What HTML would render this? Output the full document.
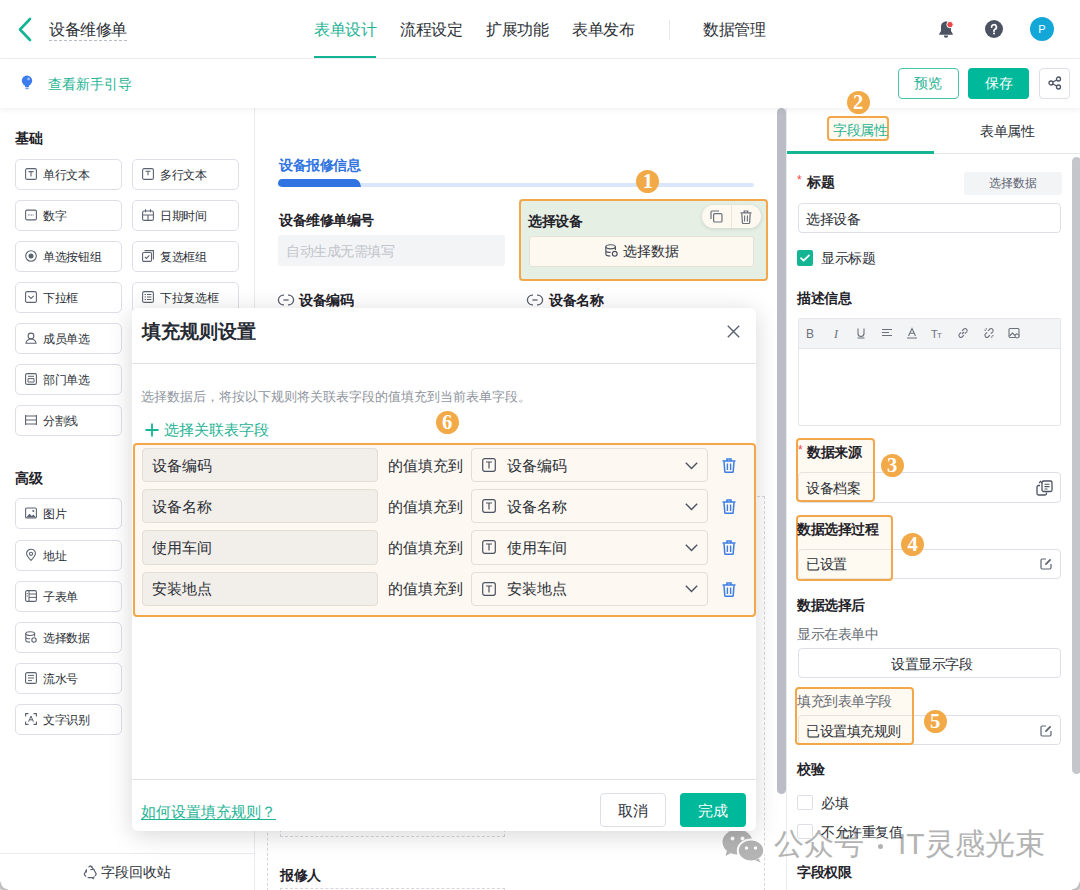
<!DOCTYPE html>
<html><head><meta charset="utf-8">
<style>
*{box-sizing:border-box;margin:0;padding:0}
html,body{width:1080px;height:890px;overflow:hidden;background:#fff}
body{font-family:"Liberation Sans",sans-serif;color:#1f2329;position:relative}
.a{position:absolute}
.t{position:absolute;white-space:nowrap}
svg{position:absolute;overflow:visible}
.btn{position:absolute;border:1px solid #dcdfe6;border-radius:5px;background:#fff;height:31px;width:107px}
.btn .ic{position:absolute;left:9px;top:9px;width:12px;height:12px}
.btn span{position:absolute;left:27px;top:9px;font-size:12px;line-height:12px;color:#2b2f36;white-space:nowrap;transform:scale(0.975);transform-origin:0 50%}
.badge{position:absolute;width:23px;height:23px;border-radius:50%;background:#f2aa48;color:#fff;font-family:"Liberation Serif",serif;font-size:20.5px;line-height:23.5px;text-align:center;font-weight:bold}
.obox{position:absolute;border:2px solid #f2a84a;border-radius:4px}
.ov{background:rgba(255,236,205,0.28)!important}
</style></head>
<body>
<!-- HEADER -->
<div class="a" style="left:0;top:0;width:1080px;height:59px;border-bottom:1px solid #eceef1;background:#fff"></div>
<svg style="left:17px;top:17px" width="16" height="25" viewBox="0 0 16 25"><path d="M13 2 L3 12.5 L13 23" fill="none" stroke="#13b592" stroke-width="2.6" stroke-linecap="round" stroke-linejoin="round"/></svg>
<div class="t" style="left:49px;top:22px;font-size:16px;line-height:16px;color:#2b2f36;transform:scale(0.975);transform-origin:0 50%">设备维修单</div>
<div class="a" style="left:49px;top:40px;width:78px;height:0;border-top:1px dashed #b8bcc4"></div>

<div class="t" style="left:314px;top:21.5px;font-size:16px;line-height:16px;color:#1fb394;transform:scale(0.97);transform-origin:0 50%">表单设计</div>
<div class="a" style="left:314px;top:55.5px;width:62px;height:2.5px;background:#13b592"></div>
<div class="t" style="left:400px;top:21.5px;font-size:16px;line-height:16px;color:#2b2f36;transform:scale(0.97);transform-origin:0 50%">流程设定</div>
<div class="t" style="left:486px;top:21.5px;font-size:16px;line-height:16px;color:#2b2f36;transform:scale(0.97);transform-origin:0 50%">扩展功能</div>
<div class="t" style="left:572px;top:21.5px;font-size:16px;line-height:16px;color:#2b2f36;transform:scale(0.97);transform-origin:0 50%">表单发布</div>
<div class="a" style="left:669px;top:20px;width:1px;height:20px;background:#e6e8eb"></div>
<div class="t" style="left:703px;top:21.5px;font-size:16px;line-height:16px;color:#2b2f36;transform:scale(0.97);transform-origin:0 50%">数据管理</div>

<!-- bell -->
<svg style="left:936px;top:19px" width="20" height="20" viewBox="0 0 20 20">
<path d="M10 2.5c-3 0-5 2.3-5 5.3v4.2l-1.8 3v0.8h13.6v-0.8l-1.8-3V7.8c0-3-2-5.3-5-5.3z" fill="#4b5262"/>
<path d="M7.8 16.6a2.2 2.2 0 0 0 4.4 0z" fill="#4b5262"/>
<circle cx="14" cy="5.6" r="3.2" fill="#f0464a" stroke="#fff" stroke-width="1"/>
</svg>
<!-- help -->
<svg style="left:985px;top:19.5px" width="18" height="18" viewBox="0 0 18 18">
<circle cx="9" cy="9" r="9" fill="#4b5262"/>
<path d="M6.6 7.1a2.4 2.4 0 1 1 3.4 2.2c-0.7 0.35-1 0.8-1 1.5v0.5" fill="none" stroke="#fff" stroke-width="1.7" stroke-linecap="round"/>
<circle cx="9" cy="13.6" r="1" fill="#fff"/>
</svg>
<!-- avatar -->
<div class="a" style="left:1030px;top:17px;width:24px;height:24px;border-radius:50%;background:#13a7d8;color:#fff;font-size:11px;line-height:24px;text-align:center">P</div>

<!-- BAR 2 -->
<div class="a" style="left:0;top:59px;width:1080px;height:49px;background:#fff;box-shadow:0 2px 6px rgba(0,0,0,0.06);z-index:2"></div>
<div style="position:absolute;left:0;top:0;z-index:3">
<svg style="left:21px;top:75px" width="12" height="15" viewBox="0 0 12 15">
<circle cx="6" cy="5.6" r="5.2" fill="#3c7cf0"/>
<path d="M3.6 9.5h4.8l-0.6 2.6h-3.6z" fill="#3c7cf0"/>
<rect x="4.2" y="12.6" width="3.6" height="1.6" rx="0.8" fill="#7aa6f5"/>
<circle cx="7.6" cy="3.9" r="1.4" fill="#9cc0ff"/>
</svg>
<div class="t" style="left:48px;top:76.5px;font-size:14px;line-height:14px;color:#1fb394">查看新手引导</div>
<div class="a" style="left:898px;top:67.5px;width:61px;height:31px;border:1px solid #46c2a8;border-radius:4px;background:#fff"></div>
<div class="t" style="left:914px;top:76px;font-size:14px;line-height:14px;color:#1fb394;font-weight:500">预览</div>
<div class="a" style="left:968px;top:67.5px;width:61px;height:31px;border-radius:4px;background:#00b89a"></div>
<div class="t" style="left:984.5px;top:76px;font-size:14px;line-height:14px;color:#fff;font-weight:500">保存</div>
<div class="a" style="left:1039px;top:67.5px;width:31px;height:31px;border:1px solid #dcdfe6;border-radius:4px;background:#fff"></div>
<svg style="left:1048px;top:76px" width="14" height="14" viewBox="0 0 14 14">
<circle cx="10.5" cy="3" r="2" fill="none" stroke="#4b5262" stroke-width="1.3"/>
<circle cx="3" cy="7" r="2" fill="none" stroke="#4b5262" stroke-width="1.3"/>
<circle cx="10.5" cy="11" r="2" fill="none" stroke="#4b5262" stroke-width="1.3"/>
<path d="M4.8 6L8.7 4M4.8 8L8.7 10" stroke="#4b5262" stroke-width="1.3"/>
</svg>
</div>

<!-- LEFT PANEL -->
<div class="a" style="left:0;top:108px;width:255px;height:782px;border-right:1px solid #e9ebee;background:#fff"></div>
<div class="t" style="left:14.5px;top:131px;font-size:14px;line-height:14px;font-weight:bold;color:#1f2329">基础</div>
<div class="btn" style="left:15px;top:159px"><svg class="ic" style="left:8.8px;top:8px" width="12" height="12" viewBox="0 0 12 12"><rect x="0.6" y="0.6" width="10.8" height="10.8" rx="1.5" fill="none" stroke="#5c6370" stroke-width="1.1"/><path d="M3.5 3.6h5M6 3.6v5" stroke="#5c6370" stroke-width="1.1"/></svg><span>单行文本</span></div>
<div class="btn" style="left:15px;top:200px"><svg class="ic" style="left:8.8px;top:8px" width="12" height="12" viewBox="0 0 12 12"><rect x="0.6" y="1.1" width="10.8" height="9.8" rx="1.5" fill="none" stroke="#5c6370" stroke-width="1.1"/><path d="M2.8 6h6.4" stroke="#5c6370" stroke-width="0.9" stroke-dasharray="1 0.6"/></svg><span>数字</span></div>
<div class="btn" style="left:15px;top:241px"><svg class="ic" style="left:8.8px;top:8px" width="12" height="12" viewBox="0 0 12 12"><circle cx="6" cy="6" r="5.3" fill="none" stroke="#5c6370" stroke-width="1.1"/><circle cx="6" cy="6" r="2.5" fill="#5c6370"/></svg><span>单选按钮组</span></div>
<div class="btn" style="left:15px;top:282px"><svg class="ic" style="left:8.8px;top:8px" width="12" height="12" viewBox="0 0 12 12"><rect x="0.6" y="0.6" width="10.8" height="10.8" rx="1.5" fill="none" stroke="#5c6370" stroke-width="1.1"/><path d="M3.3 4.8l2.7 2.6 2.7-2.6" fill="none" stroke="#5c6370" stroke-width="1.1"/></svg><span>下拉框</span></div>
<div class="btn" style="left:15px;top:323px"><svg class="ic" style="left:8.8px;top:8px" width="12" height="12" viewBox="0 0 12 12"><circle cx="6" cy="4" r="2.9" fill="none" stroke="#5c6370" stroke-width="1.1"/><path d="M1 11.2c0.6-2.8 2.6-4.2 5-4.2s4.4 1.4 5 4.2z" fill="none" stroke="#5c6370" stroke-width="1.1"/></svg><span>成员单选</span></div>
<div class="btn" style="left:15px;top:364px"><svg class="ic" style="left:8.8px;top:8px" width="12" height="12" viewBox="0 0 12 12"><rect x="0.6" y="0.6" width="10.8" height="10.8" rx="1.5" fill="none" stroke="#5c6370" stroke-width="1.1"/><path d="M3 3.3h6M3 5.6h6v3.4H3z" fill="none" stroke="#5c6370" stroke-width="1"/></svg><span>部门单选</span></div>
<div class="btn" style="left:15px;top:405px"><svg class="ic" style="left:8.8px;top:8px" width="12" height="12" viewBox="0 0 12 12"><path d="M0.6 1v10M11.4 1v10M0.6 6h10.8M0.6 2h10.8M0.6 10h10.8" stroke="#5c6370" stroke-width="1.1"/></svg><span>分割线</span></div>
<div class="btn" style="left:132px;top:159px"><svg class="ic" style="left:8.8px;top:8px" width="12" height="12" viewBox="0 0 12 12"><rect x="0.6" y="0.6" width="10.8" height="10.8" rx="1.5" fill="none" stroke="#5c6370" stroke-width="1.1"/><path d="M3.5 3.2h5M6 3.2v4" stroke="#5c6370" stroke-width="1.1"/></svg><span>多行文本</span></div>
<div class="btn" style="left:132px;top:200px"><svg class="ic" style="left:8.8px;top:8px" width="12" height="12" viewBox="0 0 12 12"><rect x="0.6" y="2" width="10.8" height="9.4" rx="1.5" fill="none" stroke="#5c6370" stroke-width="1.1"/><path d="M3.5 0.3v3M8.5 0.3v3M0.8 6h10.4M6 6v5" stroke="#5c6370" stroke-width="1.1"/></svg><span>日期时间</span></div>
<div class="btn" style="left:132px;top:241px"><svg class="ic" style="left:8.8px;top:8px" width="12" height="12" viewBox="0 0 12 12"><path d="M2.5 0.6h8.9v8.9" fill="none" stroke="#5c6370" stroke-width="1.1"/><rect x="0.6" y="2.5" width="8.9" height="8.9" rx="1.2" fill="none" stroke="#5c6370" stroke-width="1.1"/><path d="M2.8 6.8l1.6 1.6 3-3" fill="none" stroke="#5c6370" stroke-width="1.1"/></svg><span>复选框组</span></div>
<div class="btn" style="left:132px;top:282px"><svg class="ic" style="left:8.8px;top:8px" width="12" height="12" viewBox="0 0 12 12"><rect x="0.6" y="0.6" width="10.8" height="10.8" rx="1.5" fill="none" stroke="#5c6370" stroke-width="1.1"/><path d="M2.6 3.5h1.4M5 3.5h4.4M2.6 6h1.4M5 6h4.4M2.6 8.5h1.4M5 8.5h4.4" stroke="#5c6370" stroke-width="1"/></svg><span>下拉复选框</span></div>
<div class="t" style="left:14.5px;top:470.5px;font-size:14px;line-height:14px;font-weight:bold;color:#1f2329">高级</div>
<div class="btn" style="left:15px;top:498.3px"><svg class="ic" style="left:8.8px;top:8px" width="12" height="12" viewBox="0 0 12 12"><rect x="0.6" y="1" width="10.8" height="10" rx="1.3" fill="none" stroke="#5c6370" stroke-width="1.1"/><path d="M1.2 10.4l3.3-3.6 2.3 2.2 1.6-1.6 2.6 3z" fill="#5c6370"/><circle cx="8.3" cy="3.9" r="1" fill="#5c6370"/></svg><span>图片</span></div>
<div class="btn" style="left:15px;top:539.5px"><svg class="ic" style="left:8.8px;top:8px" width="12" height="12" viewBox="0 0 12 12"><path d="M6 11.4c-2.8-2.8-4.4-5-4.4-6.8a4.4 4.4 0 0 1 8.8 0c0 1.8-1.6 4-4.4 6.8z" fill="none" stroke="#5c6370" stroke-width="1.1"/><circle cx="6" cy="4.8" r="1.6" fill="none" stroke="#5c6370" stroke-width="1.1"/></svg><span>地址</span></div>
<div class="btn" style="left:15px;top:580.7px"><svg class="ic" style="left:8.8px;top:8px" width="12" height="12" viewBox="0 0 12 12"><rect x="0.6" y="0.6" width="10.8" height="10.8" rx="1.5" fill="none" stroke="#5c6370" stroke-width="1.1"/><path d="M4 0.8v10.4M4 4h7.2M4 7.4h7.2M1.6 3.6h1.2M1.6 6h1.2" stroke="#5c6370" stroke-width="1"/></svg><span>子表单</span></div>
<div class="btn" style="left:15px;top:621.9px"><svg class="ic" style="left:8.8px;top:8px" width="12" height="12" viewBox="0 0 12 12"><ellipse cx="5.2" cy="2.6" rx="4.4" ry="1.9" fill="none" stroke="#5c6370" stroke-width="1.1"/><path d="M0.8 2.6v6.6c0 1 1.8 1.9 4.2 1.9M9.6 2.6v3M0.8 5.9c0 1 1.8 1.9 4.4 1.9" fill="none" stroke="#5c6370" stroke-width="1.1"/><circle cx="9" cy="9" r="2.2" fill="none" stroke="#5c6370" stroke-width="1.1"/></svg><span>选择数据</span></div>
<div class="btn" style="left:15px;top:663.1px"><svg class="ic" style="left:8.8px;top:8px" width="12" height="12" viewBox="0 0 12 12"><rect x="0.6" y="0.6" width="10.8" height="10.8" rx="1.5" fill="none" stroke="#5c6370" stroke-width="1.1"/><path d="M3 3.4h6M3 6h6M3 8.6h4" stroke="#5c6370" stroke-width="1"/></svg><span>流水号</span></div>
<div class="btn" style="left:15px;top:704.3px"><svg class="ic" style="left:8.8px;top:8px" width="12" height="12" viewBox="0 0 12 12"><path d="M0.6 3.5V0.6h2.9M8.5 0.6h2.9v2.9M11.4 8.5v2.9H8.5M3.5 11.4H0.6V8.5" fill="none" stroke="#5c6370" stroke-width="1.1"/><path d="M3.6 8.8L6 3l2.4 5.8M4.5 6.8h3" fill="none" stroke="#5c6370" stroke-width="1"/></svg><span>文字识别</span></div>
<div class="a" style="left:0;top:853px;width:254px;height:1px;background:#e9ebee"></div>
<svg style="left:83px;top:865px" width="15" height="14" viewBox="0 0 15 14"><path d="M5.6 2.2L7.5 0.8l2 1.5M10.6 4.3l2.6 4.6-1 2.2M9.6 12.6H4.6M2.8 11.6l-1.6-2.4 2.4-4.4" fill="none" stroke="#5c6370" stroke-width="1.2" stroke-linejoin="round"/><path d="M8.2 1.6l2.4 2.7-3.3 0.3M11.8 11.8l-2.6 0.9 1.6 1.2M3.5 4.2L3.2 7.6" fill="none" stroke="#5c6370" stroke-width="1.2"/></svg>
<div class="t" style="left:101px;top:865px;font-size:14px;line-height:14px;color:#2b2f36">字段回收站</div>

<!-- CANVAS -->
<div class="t" style="left:278.5px;top:157.8px;font-size:14px;line-height:14px;transform:scale(0.97);transform-origin:0 50%;font-weight:bold;color:#2f74e0">设备报修信息</div>
<div class="a" style="left:278px;top:183px;width:476px;height:4px;background:#d9e6fb;border-radius:2px"></div>
<svg style="left:278px;top:179px" width="83" height="8" viewBox="0 0 83 8"><path d="M4 0H76C79 0 80.5 1.5 82 4L83 8H5C2 8 0 6.5 0 4.5C0 2 1.5 0 4 0Z" fill="#2f74e0"/></svg>
<div class="t" style="left:278.5px;top:213.3px;font-size:14px;line-height:14px;transform:scale(0.97);transform-origin:0 50%;font-weight:bold;color:#1f2329">设备维修单编号</div>
<div class="a" style="left:278px;top:235px;width:227px;height:31px;background:#f3f4f6;border-radius:3px"></div>
<div class="t" style="left:286px;top:243.85px;font-size:14px;line-height:14px;transform:scale(0.97);transform-origin:0 50%;color:#c2c5cb">自动生成无需填写</div>
<div class="obox" style="left:518.5px;top:199px;width:249px;height:81.5px;background:#e6efe4"></div>
<div class="t" style="left:528px;top:213.9px;font-size:14px;line-height:14px;transform:scale(0.97);transform-origin:0 50%;font-weight:bold;color:#1f2329">选择设备</div>
<div class="a" style="left:702px;top:205px;width:59px;height:23px;background:#fdf8f0;border-radius:12px;box-shadow:0 1px 4px rgba(0,0,0,0.12)"></div>
<div class="a" style="left:731px;top:205px;width:1px;height:23px;background:#ece6dc"></div>
<svg style="left:710px;top:210px" width="13" height="13" viewBox="0 0 13 13"><rect x="3.6" y="3.6" width="8.4" height="8.4" rx="1.3" fill="none" stroke="#6b717c" stroke-width="1.2"/><path d="M1 9V2.2C1 1.5 1.5 1 2.2 1H9" fill="none" stroke="#6b717c" stroke-width="1.2"/></svg>
<svg style="left:739.5px;top:209.5px" width="12" height="14" viewBox="0 0 12 14"><path d="M0.5 2.8h11M4.2 2.6V1h3.6v1.6" fill="none" stroke="#6b717c" stroke-width="1.2"/><path d="M1.8 3.2l0.6 9.4c0 0.5 0.4 0.9 0.9 0.9h5.4c0.5 0 0.9-0.4 0.9-0.9l0.6-9.4" fill="none" stroke="#6b717c" stroke-width="1.2"/><path d="M4.6 5.4v6M7.4 5.4v6" stroke="#6b717c" stroke-width="1.1"/></svg>
<div class="a" style="left:528.5px;top:235.5px;width:225px;height:31px;background:#fdf8f0;border:1px solid #e6e1d9;border-radius:3px"></div>
<svg style="left:604.5px;top:244px" width="13" height="13" viewBox="0 0 12 12"><ellipse cx="5.2" cy="2.6" rx="4.4" ry="1.9" fill="none" stroke="#4b5262" stroke-width="1.1"/><path d="M0.8 2.6v6.6c0 1 1.8 1.9 4.2 1.9M9.6 2.6v3M0.8 5.9c0 1 1.8 1.9 4.4 1.9" fill="none" stroke="#4b5262" stroke-width="1.1"/><circle cx="9" cy="9" r="2.2" fill="none" stroke="#4b5262" stroke-width="1.1"/></svg>
<div class="t" style="left:622.5px;top:244px;font-size:14px;line-height:14px;color:#2b2f36">选择数据</div>
<svg style="left:279px;top:294px" width="14" height="12" viewBox="0 0 14 12"><path d="M5 1.2H4.2a4.8 4.8 0 0 0 0 9.6H5M9 1.2h0.8a4.8 4.8 0 0 1 0 9.6H9" fill="none" stroke="#5c6370" stroke-width="1.3"/><path d="M4.4 6h5.2" stroke="#5c6370" stroke-width="1.3"/></svg>
<div class="t" style="left:298.5px;top:292.9px;font-size:14px;line-height:14px;transform:scale(0.97);transform-origin:0 50%;font-weight:bold;color:#1f2329">设备编码</div>
<svg style="left:528px;top:294px" width="14" height="12" viewBox="0 0 14 12"><path d="M5 1.2H4.2a4.8 4.8 0 0 0 0 9.6H5M9 1.2h0.8a4.8 4.8 0 0 1 0 9.6H9" fill="none" stroke="#5c6370" stroke-width="1.3"/><path d="M4.4 6h5.2" stroke="#5c6370" stroke-width="1.3"/></svg>
<div class="t" style="left:548.5px;top:292.9px;font-size:14px;line-height:14px;transform:scale(0.97);transform-origin:0 50%;font-weight:bold;color:#1f2329">设备名称</div>
<div class="a" style="left:267px;top:496px;width:498px;height:420px;border:1px dashed #d4d7dc"></div>
<div class="a" style="left:280px;top:780px;width:225px;height:57px;border:1px dashed #d4d7dc;border-top:none"></div>
<div class="t" style="left:279.5px;top:867.8px;font-size:14px;line-height:14px;transform:scale(0.97);transform-origin:0 50%;font-weight:bold;color:#1f2329">报修人</div>
<div class="a" style="left:280px;top:888px;width:225px;height:20px;border:1px dashed #d4d7dc"></div>
<div class="a" style="left:777px;top:108px;width:9px;height:686px;background:#babdc5;border-radius:4.5px"></div>
<div class="a" style="left:786px;top:108px;width:1px;height:782px;background:#e9ebee"></div>

<!-- WATERMARK -->
<div style="position:absolute;left:0;top:0;">
<svg style="left:722px;top:829px" width="43" height="34" viewBox="0 0 43 34">
<ellipse cx="15.5" cy="13" rx="15" ry="12.5" fill="#b4b4b4"/>
<path d="M5 21l-1.5 6 6.5-3.5z" fill="#b4b4b4"/>
<circle cx="10.5" cy="9.5" r="2" fill="#fff"/><circle cx="20.5" cy="9.5" r="2" fill="#fff"/>
<ellipse cx="29" cy="21.5" rx="13.2" ry="11" fill="#b4b4b4" stroke="#fff" stroke-width="2"/>
<path d="M36.5 29.5l2.2 4-5.5-2.2z" fill="#b4b4b4"/>
<circle cx="24.5" cy="19" r="1.7" fill="#fff"/><circle cx="33.5" cy="19" r="1.7" fill="#fff"/>
</svg>
<div class="t" style="left:773.5px;top:829px;font-size:30px;line-height:30px;color:#b3b3b3;font-weight:300">公众号</div>
<div class="a" style="left:877.5px;top:843.5px;width:5px;height:5px;border-radius:50%;background:#b3b3b3"></div>
<div class="t" style="left:898px;top:829px;font-size:30px;line-height:30px;color:#b3b3b3;font-weight:300">IT</div>
<div class="t" style="left:925px;top:829px;font-size:30px;line-height:30px;color:#b3b3b3;font-weight:300">灵感光束</div>
</div>

<!-- RIGHT PANEL -->
<div class="a" style="left:787px;top:151px;width:147px;height:2.5px;background:#13b592"></div>
<div class="a" style="left:934px;top:153px;width:146px;height:1px;background:#e4e6ea"></div>
<div class="obox" style="left:826.5px;top:116px;width:62.0px;height:25px;background:rgba(255,238,210,0.3)"></div>
<div class="t" style="left:833px;top:123.3px;font-size:14px;line-height:14px;transform:scale(0.97);transform-origin:0 50%;color:#1fb394;">字段属性</div>
<div class="t" style="left:979.5px;top:123.9px;font-size:14px;line-height:14px;transform:scale(0.97);transform-origin:0 50%;color:#2b2f36;">表单属性</div>
<div class="a" style="left:1071.5px;top:157px;width:9px;height:617px;background:#c4c6cb;border-radius:4.5px"></div>
<div class="t" style="left:797px;top:174.0px;font-size:12px;line-height:12px;color:#f04444;">*</div>
<div class="t" style="left:807px;top:175.0px;font-size:14px;line-height:14px;transform:scale(0.97);transform-origin:0 50%;font-weight:bold;color:#1f2329;">标题</div>
<div class="a" style="left:963.5px;top:171.5px;width:98px;height:23px;background:#f3f4f6;border-radius:3px"></div>
<div class="t" style="left:988.5px;top:177.55px;font-size:11.9px;line-height:11.9px;color:#5c6370;">选择数据</div>
<div class="a" style="left:797.5px;top:202.5px;width:263.5px;height:30.0px;border:1px solid #dcdfe6;border-radius:4px;background:#fff"></div>
<div class="t" style="left:805.5px;top:211.5px;font-size:14px;line-height:14px;transform:scale(0.97);transform-origin:0 50%;color:#2b2f36;">选择设备</div>
<div class="a" style="left:796.5px;top:250px;width:16px;height:16px;background:#13b592;border-radius:2px"></div>
<svg style="left:796.5px;top:250px" width="16" height="16" viewBox="0 0 16 16"><path d="M4 8.2l2.6 2.5L12 5.4" fill="none" stroke="#fff" stroke-width="1.8" stroke-linecap="round" stroke-linejoin="round"/></svg>
<div class="t" style="left:820.5px;top:250.5px;font-size:14px;line-height:14px;transform:scale(0.97);transform-origin:0 50%;color:#2b2f36;">显示标题</div>
<div class="t" style="left:797px;top:291.0px;font-size:14px;line-height:14px;transform:scale(0.97);transform-origin:0 50%;font-weight:bold;color:#1f2329;">描述信息</div>
<div class="a" style="left:797.5px;top:317.5px;width:263.5px;height:108px;border:1px solid #e4e6ea;border-radius:2px;background:#fff"></div>
<div class="a" style="left:798.5px;top:318.5px;width:261.5px;height:30px;background:#f3f4f6;border-bottom:1px solid #e4e6ea"></div>
<svg style="left:804px;top:327.3px" width="12" height="12" viewBox="0 0 12 12"><text x="6" y="10.5" font-size="12" font-family="Liberation Sans" fill="#6b717c" text-anchor="middle">B</text></svg>
<svg style="left:829.5px;top:327.3px" width="12" height="12" viewBox="0 0 12 12"><text x="6" y="10.5" font-size="12" font-family="Liberation Serif" font-style="italic" fill="#6b717c" text-anchor="middle">I</text></svg>
<svg style="left:855px;top:327.3px" width="12" height="12" viewBox="0 0 12 12"><path d="M3 1.5v5a3 3 0 0 0 6 0v-5M2.5 11h7" fill="none" stroke="#6b717c" stroke-width="1.1"/></svg>
<svg style="left:880.6px;top:327.3px" width="12" height="12" viewBox="0 0 12 12"><path d="M1 2.5h10M1 5.5h7M1 8.5h10" fill="none" stroke="#6b717c" stroke-width="1.1"/></svg>
<svg style="left:906px;top:327.3px" width="12" height="12" viewBox="0 0 12 12"><path d="M2.5 9L6 1.5 9.5 9M3.8 6.3h4.4M1 11h10" fill="none" stroke="#6b717c" stroke-width="1.1"/></svg>
<svg style="left:931.4px;top:327.3px" width="12" height="12" viewBox="0 0 12 12"><text x="0" y="10.5" font-size="11" font-family="Liberation Sans" fill="#6b717c">T</text><text x="6" y="10.5" font-size="8" font-family="Liberation Sans" fill="#6b717c">T</text></svg>
<svg style="left:956.5px;top:327.3px" width="12" height="12" viewBox="0 0 12 12"><path d="M5 7l2-2M4.2 5.3l-1.9 1.9a2 2 0 0 0 2.8 2.8l1.9-1.9M7.8 6.7l1.9-1.9a2 2 0 0 0-2.8-2.8L5 3.9" fill="none" stroke="#6b717c" stroke-width="1.1"/></svg>
<svg style="left:982.5px;top:327.3px" width="12" height="12" viewBox="0 0 12 12"><path d="M4.2 5.3l-1.9 1.9a2 2 0 0 0 2.8 2.8l1.9-1.9M7.8 6.7l1.9-1.9a2 2 0 0 0-2.8-2.8L5 3.9M1.5 3l1.2 0.6M3 1.3l0.5 1.1M9 10.7l-0.5-1.1M10.5 9l-1.2-0.6" fill="none" stroke="#6b717c" stroke-width="1.1"/></svg>
<svg style="left:1007.9px;top:327.3px" width="12" height="12" viewBox="0 0 12 12"><rect x="1" y="1.5" width="10" height="9" rx="1" fill="none" stroke="#6b717c" stroke-width="1.1"/><path d="M1.5 9l3-3 2.5 2.5 1.5-1.5 2 2" fill="none" stroke="#6b717c" stroke-width="1.1"/><circle cx="9" cy="9" r="2" fill="#f3f4f6" stroke="#6b717c" stroke-width="1"/></svg>
<div class="a" style="left:797.5px;top:471.5px;width:263.5px;height:31.0px;border:1px solid #dcdfe6;border-radius:4px;background:#fff"></div>
<div class="obox" style="left:795.5px;top:438px;width:79.5px;height:63.5px;background:rgba(255,238,210,0.3)"></div>
<div class="t" style="left:798px;top:444.0px;font-size:12px;line-height:12px;color:#f04444;">*</div>
<div class="t" style="left:806.5px;top:444.8px;font-size:14px;line-height:14px;transform:scale(0.97);transform-origin:0 50%;font-weight:bold;color:#1f2329;">数据来源</div>
<div class="t" style="left:806px;top:480.6px;font-size:14px;line-height:14px;transform:scale(0.97);transform-origin:0 50%;color:#2b2f36;">设备档案</div>
<svg style="left:1036px;top:479.5px" width="17" height="16" viewBox="0 0 17 16"><rect x="6" y="1" width="10" height="10.5" rx="1.5" fill="none" stroke="#4b5262" stroke-width="1.3"/><path d="M8.5 4.2h5M8.5 6.6h5M8.5 9h3" stroke="#4b5262" stroke-width="1.1"/><path d="M4 5.5H2.5C1.7 5.5 1 6.2 1 7v6.5C1 14.3 1.7 15 2.5 15H9c0.8 0 1.5-0.7 1.5-1.5V12.5" fill="none" stroke="#4b5262" stroke-width="1.3"/><path d="M3 3.2l1.6-1.8 1.4 1.8" fill="none" stroke="#4b5262" stroke-width="1.1"/></svg>
<div class="badge" style="left:880.5px;top:453.5px">3</div>
<div class="a" style="left:797.5px;top:548.5px;width:263.5px;height:30.5px;border:1px solid #dcdfe6;border-radius:4px;background:#fff"></div>
<div class="obox" style="left:795.5px;top:514.5px;width:97.0px;height:66.0px;background:rgba(255,238,210,0.3)"></div>
<div class="t" style="left:797px;top:521.7px;font-size:14px;line-height:14px;transform:scale(0.97);transform-origin:0 50%;font-weight:bold;color:#1f2329;">数据选择过程</div>
<div class="t" style="left:806px;top:557.0px;font-size:14px;line-height:14px;transform:scale(0.97);transform-origin:0 50%;color:#2b2f36;">已设置</div>
<svg style="left:1040px;top:558px" width="12" height="12" viewBox="0 0 12 12"><path d="M6 1H2.2C1.5 1 1 1.5 1 2.2v7.6c0 0.7 0.5 1.2 1.2 1.2h7.6c0.7 0 1.2-0.5 1.2-1.2V6" fill="none" stroke="#5c6370" stroke-width="1.2"/><path d="M5 7l0.3-1.6L10 0.8l1.2 1.2L6.6 6.7z" fill="#5c6370"/></svg>
<div class="badge" style="left:901.0px;top:533.2px">4</div>
<div class="t" style="left:797px;top:598.0px;font-size:14px;line-height:14px;transform:scale(0.97);transform-origin:0 50%;font-weight:bold;color:#1f2329;">数据选择后</div>
<div class="t" style="left:797px;top:627.0px;font-size:14px;line-height:14px;transform:scale(0.97);transform-origin:0 50%;color:#646a73;">显示在表单中</div>
<div class="a" style="left:797.5px;top:648.2px;width:263.5px;height:30.199999999999932px;border:1px solid #dcdfe6;border-radius:4px;background:#fff"></div>
<div class="t" style="left:891px;top:656.6px;font-size:14px;line-height:14px;transform:scale(0.97);transform-origin:0 50%;color:#2b2f36;">设置显示字段</div>
<div class="a" style="left:797.5px;top:715.2px;width:263.5px;height:30.09999999999991px;border:1px solid #dcdfe6;border-radius:4px;background:#fff"></div>
<div class="obox" style="left:794.5px;top:687px;width:119.5px;height:57.5px;background:rgba(255,238,210,0.3)"></div>
<div class="t" style="left:797px;top:694.0px;font-size:14px;line-height:14px;transform:scale(0.97);transform-origin:0 50%;color:#646a73;">填充到表单字段</div>
<div class="t" style="left:806px;top:723.5px;font-size:14px;line-height:14px;transform:scale(0.97);transform-origin:0 50%;color:#2b2f36;">已设置填充规则</div>
<svg style="left:1040px;top:724.5px" width="12" height="12" viewBox="0 0 12 12"><path d="M6 1H2.2C1.5 1 1 1.5 1 2.2v7.6c0 0.7 0.5 1.2 1.2 1.2h7.6c0.7 0 1.2-0.5 1.2-1.2V6" fill="none" stroke="#5c6370" stroke-width="1.2"/><path d="M5 7l0.3-1.6L10 0.8l1.2 1.2L6.6 6.7z" fill="#5c6370"/></svg>
<div class="badge" style="left:923.7px;top:709.9px">5</div>
<div class="t" style="left:797px;top:761.5px;font-size:14px;line-height:14px;transform:scale(0.97);transform-origin:0 50%;font-weight:bold;color:#1f2329;">校验</div>
<div class="a" style="left:797px;top:795.3px;width:15.5px;height:15px;border:1px solid #dcdfe6;border-radius:2px;background:#fff"></div>
<div class="t" style="left:820.5px;top:796.0px;font-size:14px;line-height:14px;transform:scale(0.97);transform-origin:0 50%;color:#2b2f36;">必填</div>
<div class="a" style="left:797px;top:824.3px;width:15.5px;height:15px;border:1px solid #dcdfe6;border-radius:2px;background:#fff"></div>
<div class="t" style="left:820.5px;top:825.0px;font-size:14px;line-height:14px;transform:scale(0.97);transform-origin:0 50%;color:#2b2f36;">不允许重复值</div>
<div class="t" style="left:797px;top:865.0px;font-size:14px;line-height:14px;transform:scale(0.97);transform-origin:0 50%;font-weight:bold;color:#1f2329;">字段权限</div>

<!-- MODAL -->
<div class="a" style="left:132px;top:308px;width:624px;height:523px;background:#fff;border-radius:6px;box-shadow:0 4px 24px rgba(0,0,0,0.16);z-index:10">
<div class="t" style="left:9.8px;top:15.05px;font-size:18.9px;line-height:18.9px;font-weight:bold;color:#252a33;">填充规则设置</div>
<svg style="left:595px;top:17px" width="13" height="13" viewBox="0 0 13 13"><path d="M0.8 0.8l11.4 11.4M12.2 0.8L0.8 12.2" stroke="#5a6270" stroke-width="1.4"/></svg>
<div class="a" style="left:0;top:55px;width:624px;height:1px;background:#e1e3e7"></div>
<div class="t" style="left:9px;top:82.3px;font-size:13px;line-height:13px;color:#8f959e;">选择数据后，将按以下规则将关联表字段的值填充到当前表单字段。</div>
<svg style="left:12.5px;top:115px" width="14" height="14" viewBox="0 0 14 14"><path d="M7 0.5v13M0.5 7h13" stroke="#13b592" stroke-width="1.8"/></svg>
<div class="t" style="left:32px;top:114.2px;font-size:15px;line-height:15px;color:#1fb394;">选择关联表字段</div>
<div class="obox" style="left:0.5px;top:134.7px;width:623px;height:174px;background:#fdf8f1"></div>
<div class="a" style="left:9.6px;top:140.2px;width:236.6px;height:34.2px;background:#f2eee9;border:1px solid #e2ddd5;border-radius:4px"></div>
<div class="t" style="left:19.5px;top:149.7px;font-size:15px;line-height:15px;color:#2b2f36;">设备编码</div>
<div class="t" style="left:255.5px;top:149.7px;font-size:15px;line-height:15px;color:#2b2f36;">的值填充到</div>
<div class="a" style="left:339px;top:140.2px;width:236.7px;height:34.2px;border:1px solid #e3ded7;border-radius:4px"></div>
<svg style="left:350px;top:150.2px" width="14" height="14" viewBox="0 0 14 14"><rect x="0.7" y="0.7" width="12.6" height="12.6" rx="2" fill="none" stroke="#4b5262" stroke-width="1.2"/><path d="M4 4h6M7 4v6.5" stroke="#4b5262" stroke-width="1.2"/></svg>
<div class="t" style="left:375px;top:149.7px;font-size:15px;line-height:15px;color:#2b2f36;">设备编码</div>
<svg style="left:552.5px;top:153.7px" width="13" height="8" viewBox="0 0 13 8"><path d="M0.8 0.8l5.7 5.7 5.7-5.7" fill="none" stroke="#4b5262" stroke-width="1.4"/></svg>
<svg style="left:590px;top:150.2px" width="14" height="15" viewBox="0 0 14 15"><path d="M0.5 3h13M5 3V1h4v2" fill="none" stroke="#3b7de6" stroke-width="1.5"/><path d="M2 3.5l0.8 10c0 0.4 0.3 0.8 0.8 0.8h6.8c0.5 0 0.8-0.4 0.8-0.8l0.8-10" fill="none" stroke="#3b7de6" stroke-width="1.5"/><path d="M5.4 5.6v6.4M8.6 5.6v6.4" stroke="#3b7de6" stroke-width="1.4"/></svg>
<div class="a" style="left:9.6px;top:181.3px;width:236.6px;height:34.2px;background:#f2eee9;border:1px solid #e2ddd5;border-radius:4px"></div>
<div class="t" style="left:19.5px;top:190.8px;font-size:15px;line-height:15px;color:#2b2f36;">设备名称</div>
<div class="t" style="left:255.5px;top:190.8px;font-size:15px;line-height:15px;color:#2b2f36;">的值填充到</div>
<div class="a" style="left:339px;top:181.3px;width:236.7px;height:34.2px;border:1px solid #e3ded7;border-radius:4px"></div>
<svg style="left:350px;top:191.3px" width="14" height="14" viewBox="0 0 14 14"><rect x="0.7" y="0.7" width="12.6" height="12.6" rx="2" fill="none" stroke="#4b5262" stroke-width="1.2"/><path d="M4 4h6M7 4v6.5" stroke="#4b5262" stroke-width="1.2"/></svg>
<div class="t" style="left:375px;top:190.8px;font-size:15px;line-height:15px;color:#2b2f36;">设备名称</div>
<svg style="left:552.5px;top:194.8px" width="13" height="8" viewBox="0 0 13 8"><path d="M0.8 0.8l5.7 5.7 5.7-5.7" fill="none" stroke="#4b5262" stroke-width="1.4"/></svg>
<svg style="left:590px;top:191.3px" width="14" height="15" viewBox="0 0 14 15"><path d="M0.5 3h13M5 3V1h4v2" fill="none" stroke="#3b7de6" stroke-width="1.5"/><path d="M2 3.5l0.8 10c0 0.4 0.3 0.8 0.8 0.8h6.8c0.5 0 0.8-0.4 0.8-0.8l0.8-10" fill="none" stroke="#3b7de6" stroke-width="1.5"/><path d="M5.4 5.6v6.4M8.6 5.6v6.4" stroke="#3b7de6" stroke-width="1.4"/></svg>
<div class="a" style="left:9.6px;top:222.4px;width:236.6px;height:34.2px;background:#f2eee9;border:1px solid #e2ddd5;border-radius:4px"></div>
<div class="t" style="left:19.5px;top:231.9px;font-size:15px;line-height:15px;color:#2b2f36;">使用车间</div>
<div class="t" style="left:255.5px;top:231.9px;font-size:15px;line-height:15px;color:#2b2f36;">的值填充到</div>
<div class="a" style="left:339px;top:222.4px;width:236.7px;height:34.2px;border:1px solid #e3ded7;border-radius:4px"></div>
<svg style="left:350px;top:232.4px" width="14" height="14" viewBox="0 0 14 14"><rect x="0.7" y="0.7" width="12.6" height="12.6" rx="2" fill="none" stroke="#4b5262" stroke-width="1.2"/><path d="M4 4h6M7 4v6.5" stroke="#4b5262" stroke-width="1.2"/></svg>
<div class="t" style="left:375px;top:231.9px;font-size:15px;line-height:15px;color:#2b2f36;">使用车间</div>
<svg style="left:552.5px;top:235.9px" width="13" height="8" viewBox="0 0 13 8"><path d="M0.8 0.8l5.7 5.7 5.7-5.7" fill="none" stroke="#4b5262" stroke-width="1.4"/></svg>
<svg style="left:590px;top:232.4px" width="14" height="15" viewBox="0 0 14 15"><path d="M0.5 3h13M5 3V1h4v2" fill="none" stroke="#3b7de6" stroke-width="1.5"/><path d="M2 3.5l0.8 10c0 0.4 0.3 0.8 0.8 0.8h6.8c0.5 0 0.8-0.4 0.8-0.8l0.8-10" fill="none" stroke="#3b7de6" stroke-width="1.5"/><path d="M5.4 5.6v6.4M8.6 5.6v6.4" stroke="#3b7de6" stroke-width="1.4"/></svg>
<div class="a" style="left:9.6px;top:263.5px;width:236.6px;height:34.2px;background:#f2eee9;border:1px solid #e2ddd5;border-radius:4px"></div>
<div class="t" style="left:19.5px;top:273.0px;font-size:15px;line-height:15px;color:#2b2f36;">安装地点</div>
<div class="t" style="left:255.5px;top:273.0px;font-size:15px;line-height:15px;color:#2b2f36;">的值填充到</div>
<div class="a" style="left:339px;top:263.5px;width:236.7px;height:34.2px;border:1px solid #e3ded7;border-radius:4px"></div>
<svg style="left:350px;top:273.5px" width="14" height="14" viewBox="0 0 14 14"><rect x="0.7" y="0.7" width="12.6" height="12.6" rx="2" fill="none" stroke="#4b5262" stroke-width="1.2"/><path d="M4 4h6M7 4v6.5" stroke="#4b5262" stroke-width="1.2"/></svg>
<div class="t" style="left:375px;top:273.0px;font-size:15px;line-height:15px;color:#2b2f36;">安装地点</div>
<svg style="left:552.5px;top:277.0px" width="13" height="8" viewBox="0 0 13 8"><path d="M0.8 0.8l5.7 5.7 5.7-5.7" fill="none" stroke="#4b5262" stroke-width="1.4"/></svg>
<svg style="left:590px;top:273.5px" width="14" height="15" viewBox="0 0 14 15"><path d="M0.5 3h13M5 3V1h4v2" fill="none" stroke="#3b7de6" stroke-width="1.5"/><path d="M2 3.5l0.8 10c0 0.4 0.3 0.8 0.8 0.8h6.8c0.5 0 0.8-0.4 0.8-0.8l0.8-10" fill="none" stroke="#3b7de6" stroke-width="1.5"/><path d="M5.4 5.6v6.4M8.6 5.6v6.4" stroke="#3b7de6" stroke-width="1.4"/></svg>
<div class="a" style="left:0;top:471px;width:624px;height:1px;background:#e1e3e7"></div>
<div class="t" style="left:9px;top:495.5px;font-size:15px;line-height:15px;color:#1fb394;text-decoration:underline;text-underline-offset:2px">如何设置填充规则？</div>
<div class="a" style="left:467.8px;top:485.4px;width:65.8px;height:33.3px;border:1px solid #dcdfe6;border-radius:4px;background:#fff"></div>
<div class="t" style="left:485.5px;top:494.5px;font-size:15px;line-height:15px;color:#2b2f36;">取消</div>
<div class="a" style="left:547.6px;top:485px;width:66.3px;height:34px;border-radius:4px;background:#00b89a"></div>
<div class="t" style="left:565.5px;top:494.5px;font-size:15px;line-height:15px;color:#fff;">完成</div>
<div class="badge" style="left:303.5px;top:102.5px">6</div>
</div>
<div class="badge" style="left:636.3px;top:169.5px">1</div>

<!-- WATERMARK -->
<div class="badge" style="left:846.7px;top:90.5px;z-index:5">2</div>
<div class="a" style="left:0;top:882px;width:8px;height:8px;z-index:30;background:radial-gradient(circle at 8px 0px, transparent 6.5px, rgba(110,110,110,0.5) 8px, rgba(160,160,160,0.35) 11px)"></div>
<div class="a" style="left:1072px;top:882px;width:8px;height:8px;z-index:30;background:radial-gradient(circle at 0px 0px, transparent 6.5px, rgba(110,110,110,0.5) 8px, rgba(160,160,160,0.35) 11px)"></div>
<!--WM-->
</body></html>
